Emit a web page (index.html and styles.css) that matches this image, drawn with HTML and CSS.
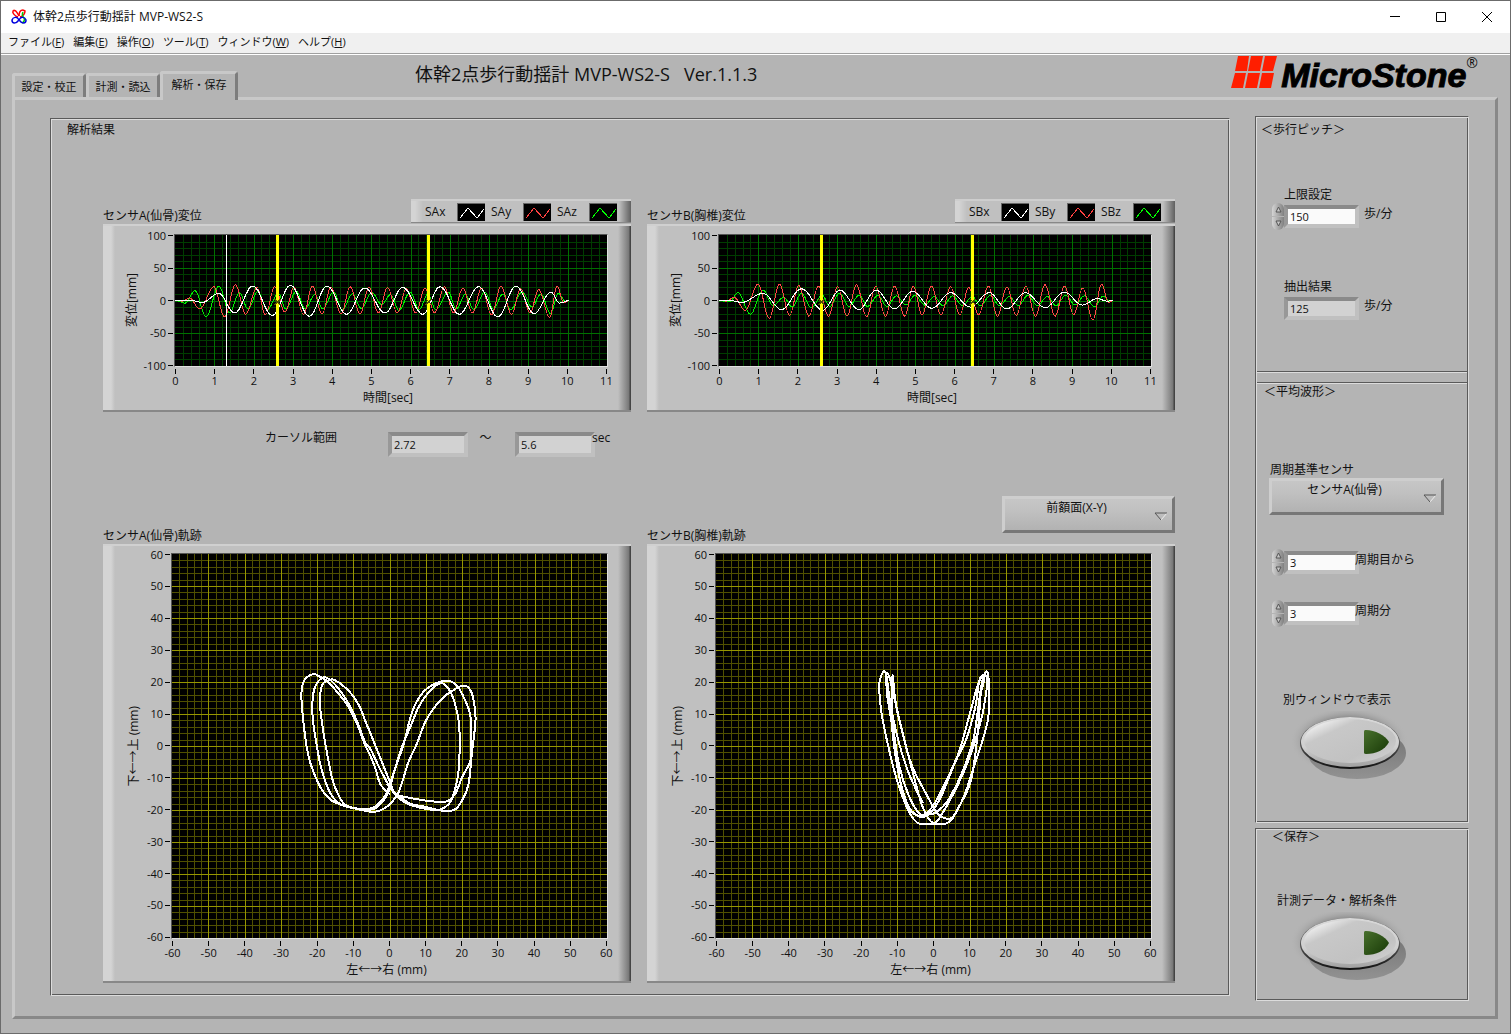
FILE: index.html
```html
<!DOCTYPE html>
<html lang="ja">
<head>
  <meta charset="utf-8">
  <title>体幹2点歩行動揺計 MVP-WS2-S</title>
  <link rel="stylesheet" href="styles.css">
</head>
<body>
  <div class="window">
    <header class="titlebar">
      <svg class="app-icon" width="16" height="16" viewBox="0 0 16 16" fill="none" stroke-width="1.5">
        <path stroke="#f00" d="M7 8C4 7 1 4 2 2C4 0 6 3 8 7"/>
        <path stroke="#f00" d="M8 7C8 3 10 1 12 1"/>
        <path stroke="#f00" d="M9 8C12 7 14 5 14 2L12 1"/>
        <path stroke="#0c0" d="M12 3C11 5 11 7 13 9C14 11 13 13 11 14"/>
        <path stroke="#00d" d="M8 11C6 7 2 8 1 11C1 15 5 15 8 11"/>
        <path stroke="#00d" d="M8 11C10 7 14 8 15 11C15 15 11 15 8 11"/>
      </svg>
      <span class="app-name">体幹2点歩行動揺計 MVP-WS2-S</span>
      <div class="window-buttons">
        <button type="button" aria-label="最小化"><svg width="12" height="12" viewBox="0 0 12 12"><path d="M1 5.500H11"/></svg></button>
        <button type="button" aria-label="最大化"><svg width="12" height="12" viewBox="0 0 12 12"><path d="M1.500 1.500H10.500V10.500H1.500Z"/></svg></button>
        <button type="button" aria-label="閉じる"><svg width="12" height="12" viewBox="0 0 12 12"><path d="M1 1L11 11M11 1L1 11"/></svg></button>
      </div>
    </header>
    <nav class="menubar">
      <button type="button">ファイル(<u>F</u>)</button>
      <button type="button">編集(<u>E</u>)</button>
      <button type="button">操作(<u>O</u>)</button>
      <button type="button">ツール(<u>T</u>)</button>
      <button type="button">ウィンドウ(<u>W</u>)</button>
      <button type="button">ヘルプ(<u>H</u>)</button>
    </nav>

    <main class="workspace">
      <div class="top">
        <div class="tabs">
          <button type="button" class="tab">設定・校正</button>
          <button type="button" class="tab">計測・読込</button>
          <button type="button" class="tab active">解析・保存</button>
        </div>
        <h1 class="heading"><span>体幹2点歩行動揺計 MVP-WS2-S</span><span>Ver.1.1.3</span></h1>
        <div class="logo">
          <svg width="46" height="32" viewBox="0 0 46 32" fill="#ff1e00">
            <path d="M7 0H18L16 15H4Z M20 0H32L29 15H17Z M34 0H46L42 15H31Z"/>
            <path d="M4 17H15L12 32H0Z M17 17H29L26 32H14Z M31 17H43L40 32H28Z"/>
          </svg>
          <span class="logo-name">MicroStone</span><span class="logo-mark">®</span>
        </div>
      </div>

      <div class="page">
        <section class="box results">
          <h2 class="caption">解析結果</h2>

          <div class="charts">
            <div>
              <div class="chart-head">
                <h3>センサA(仙骨)変位</h3>
                <div class="legend">
                  <span>SAx</span><svg class="x" width="28" height="18"><path d="M2 14L10 4L19 14L26 5"/></svg>
                  <span>SAy</span><svg class="y" width="28" height="18"><path d="M2 14L10 4L19 14L26 5"/></svg>
                  <span>SAz</span><svg class="z" width="28" height="18"><path d="M2 14L10 4L19 14L26 5"/></svg>
                </div>
              </div>
              <div class="chart wave" id="waveA"></div>
            </div>
            <div>
              <div class="chart-head">
                <h3>センサB(胸椎)変位</h3>
                <div class="legend">
                  <span>SBx</span><svg class="x" width="28" height="18"><path d="M2 14L10 4L19 14L26 5"/></svg>
                  <span>SBy</span><svg class="y" width="28" height="18"><path d="M2 14L10 4L19 14L26 5"/></svg>
                  <span>SBz</span><svg class="z" width="28" height="18"><path d="M2 14L10 4L19 14L26 5"/></svg>
                </div>
              </div>
              <div class="chart wave" id="waveB"></div>
            </div>
          </div>

          <div class="range">
            <label for="rangeFrom">カーソル範囲</label>
            <input id="rangeFrom" class="field readout" value="2.72" readonly>
            <span class="tilde">～</span>
            <input id="rangeTo" class="field readout" value="5.6" aria-label="カーソル範囲 終了" readonly>
            <span>sec</span>
          </div>

          <div class="charts">
            <div>
              <div class="chart-head tall">
                <h3>センサA(仙骨)軌跡</h3>
              </div>
              <div class="chart trace" id="traceA"></div>
            </div>
            <div>
              <div class="chart-head tall">
                <h3>センサB(胸椎)軌跡</h3>
                <div class="dropdown">
                  <select aria-label="表示面">
                    <option>前額面(X-Y)</option>
                    <option>矢状面(Z-Y)</option>
                    <option>水平面(X-Z)</option>
                  </select>
                  <svg width="14" height="9" viewBox="0 0 14 9"><path d="M13 1L7 8" stroke="#eee"/><path d="M7 8L1 1H13" stroke="#555"/></svg>
                </div>
              </div>
              <div class="chart trace" id="traceB"></div>
            </div>
          </div>
        </section>

        <aside class="side">
          <div class="box">
            <section class="pitch">
              <h2 class="caption">＜歩行ピッチ＞</h2>
              <div class="setting">
                <label for="limit">上限設定</label>
                <div class="row">
                  <div class="spin">
                    <button type="button" aria-label="増やす"><svg width="7" height="7"><path d="M1 6L3.500 1L6 6Z"/></svg></button>
                    <button type="button" aria-label="減らす"><svg width="7" height="7"><path d="M1 1H6L3.500 6Z"/></svg></button>
                  </div>
                  <input id="limit" class="field" type="number" value="150">
                  <span class="unit">歩/分</span>
                </div>
              </div>
              <div class="setting">
                <label for="detected">抽出結果</label>
                <div class="row">
                  <div class="spin-space"></div>
                  <input id="detected" class="field readout" value="125" readonly>
                  <span class="unit">歩/分</span>
                </div>
              </div>
            </section>
            <div class="divider"></div>
            <section class="average">
              <h2 class="caption">＜平均波形＞</h2>
              <label class="base-label" for="baseSensor">周期基準センサ</label>
              <div class="dropdown">
                <select id="baseSensor">
                  <option>センサA(仙骨)</option>
                  <option>センサB(胸椎)</option>
                </select>
                <svg width="14" height="9" viewBox="0 0 14 9"><path d="M13 1L7 8" stroke="#eee"/><path d="M7 8L1 1H13" stroke="#555"/></svg>
              </div>
              <div class="row cycles">
                <div class="spin">
                  <button type="button" aria-label="増やす"><svg width="7" height="7"><path d="M1 6L3.500 1L6 6Z"/></svg></button>
                  <button type="button" aria-label="減らす"><svg width="7" height="7"><path d="M1 1H6L3.500 6Z"/></svg></button>
                </div>
                <input id="cycleFrom" class="field" type="number" value="3">
                <label for="cycleFrom">周期目から</label>
              </div>
              <div class="row cycles">
                <div class="spin">
                  <button type="button" aria-label="増やす"><svg width="7" height="7"><path d="M1 6L3.500 1L6 6Z"/></svg></button>
                  <button type="button" aria-label="減らす"><svg width="7" height="7"><path d="M1 1H6L3.500 6Z"/></svg></button>
                </div>
                <input id="cycleCount" class="field" type="number" value="3">
                <label for="cycleCount">周期分</label>
              </div>
              <div class="action">
                <label for="showWindow">別ウィンドウで表示</label>
                <button type="button" id="showWindow" class="oval"><svg width="120" height="70" viewBox="0 0 120 70"><use href="#ovalButton"/></svg></button>
              </div>
            </section>
          </div>
          <section class="box save">
            <h2 class="caption">＜保存＞</h2>
            <div class="action">
              <label for="saveData">計測データ・解析条件</label>
              <button type="button" id="saveData" class="oval"><svg width="120" height="70" viewBox="0 0 120 70"><use href="#ovalButton"/></svg></button>
            </div>
          </section>
        </aside>
      </div>
    </main>
  </div>

  <!-- push button with an unlit lamp -->
  <svg class="defs" width="0" height="0">
    <defs>
      <linearGradient id="face" x1="0" y1="0" x2="1" y2="1">
        <stop offset="0.1" stop-color="#f4f4f4"/>
        <stop offset="0.3" stop-color="#c8c8c8"/>
        <stop offset="0.7" stop-color="#c2c2c2"/>
        <stop offset="1" stop-color="#d4d4d4"/>
      </linearGradient>
      <linearGradient id="edge" x1="0" y1="0" x2="0" y2="1">
        <stop offset="0" stop-color="#d8d8d8"/>
        <stop offset="0.6" stop-color="#d0d0d0"/>
        <stop offset="1" stop-color="#a0a0a0"/>
      </linearGradient>
      <linearGradient id="rim" x1="0" y1="0" x2="0" y2="1">
        <stop offset="0" stop-color="#555"/>
        <stop offset="0.5" stop-color="#555"/>
        <stop offset="1" stop-color="#111"/>
      </linearGradient>
      <linearGradient id="lamp" x1="0" y1="0" x2="1" y2="1">
        <stop offset="0" stop-color="#48702c"/>
        <stop offset="1" stop-color="#173806"/>
      </linearGradient>
      <linearGradient id="shade" x1="0" y1="0" x2="0" y2="1">
        <stop offset="0" stop-color="#707070"/>
        <stop offset="1" stop-color="#929292"/>
      </linearGradient>
      <radialGradient id="halo">
        <stop offset="0.7" stop-color="#909090"/>
        <stop offset="1" stop-color="#b4b4b4" stop-opacity="0"/>
      </radialGradient>
      <g id="ovalButton">
        <ellipse cx="59" cy="30" rx="59" ry="34" fill="url(#halo)"/>
        <ellipse cx="67" cy="42" rx="49" ry="26" fill="url(#shade)"/>
        <ellipse cx="60" cy="32" rx="50" ry="26" fill="url(#rim)"/>
        <ellipse cx="60" cy="31" rx="49" ry="25" fill="url(#edge)"/>
        <ellipse cx="60" cy="30" rx="46" ry="22" fill="url(#face)"/>
        <path d="M76 19C85 19 95 24 99 31C95 39 86 43 76 43C74 43 74 42 74 41V21C74 19 75 19 76 19Z" fill="url(#lamp)"/>
      </g>
    </defs>
  </svg>
  <script src="charts.js"></script>
</body>
</html>
```

FILE: styles.css
```css
* {
  box-sizing: border-box;
}

body {
  margin: 0;
  background-color: #b4b4b4;
  color: #111;
  font-family: 'Open Sans', 'Noto Sans CJK JP', sans-serif;
  font-size: 12px;
  line-height: 16px;
}

h1, h2, h3 {
  margin: 0;
  font-size: 12px;
  font-weight: normal;
}

button, input, select {
  font: inherit;
  color: inherit;
  border: none;
  background: none;
  padding: 0;
  margin: 0;
}

svg {
  display: block;
}

.defs {
  position: absolute;
}

.window {
  display: flex;
  flex-direction: column;
  min-height: 100vh;
  border: 1px solid #6b6b6b;
}

/* title bar and menu */

.titlebar {
  display: flex;
  align-items: center;
  height: 32px;
  padding-left: 10px;
  background-color: #fff;
}

.app-name {
  flex: 1;
  margin-left: 6px;
}

.window-buttons {
  display: flex;
}

.window-buttons button {
  display: flex;
  align-items: center;
  justify-content: center;
  width: 46px;
  height: 30px;
}

.window-buttons path {
  fill: none;
  stroke: #000;
}

.menubar {
  display: flex;
  gap: 9px;
  height: 22px;
  padding-left: 7px;
  background-color: #f0f0f0;
  border-bottom: 1px solid #fff;
  box-shadow: inset 0 -1px #a0a0a0;
}

.menubar button {
  height: 18px;
  font-size: 11px;
}

/* tabs and logo */

.workspace {
  display: flex;
  flex-direction: column;
  flex: 1;
  padding: 0 12px 14px 11px;
}

.top {
  display: flex;
  justify-content: space-between;
  height: 42px;
}

.tabs {
  display: flex;
  align-items: flex-end;
  width: 403px;
}

.tab {
  width: 74px;
  height: 24px;
  background-color: #b4b4b4;
  border: solid;
  border-width: 3px 3px 0;
  border-color: #c8c8c8 #7d7d7d #c8c8c8 #c8c8c8;
  border-radius: 3px 3px 0 0;
  font-size: 11px;
}

.tab.active {
  position: relative;
  width: 78px;
  height: 29px;
  margin-bottom: -3px;
  padding-bottom: 4px;
}

.heading {
  flex: 1;
  display: flex;
  gap: 14px;
  padding-top: 6px;
  font-size: 18px;
  line-height: 26px;
}

.logo {
  display: flex;
  padding-top: 1px;
  margin-right: 20px;
}

.logo-name {
  margin-left: 4px;
  font: italic bold 34px/38px 'Liberation Sans', sans-serif;
  color: #000;
  -webkit-text-stroke: 1px #000;
}

.logo-mark {
  font-size: 14px;
  line-height: 14px;
}

/* panels */

.page {
  display: grid;
  grid-template-columns: 1fr 214px;
  gap: 26px;
  flex: 1;
  padding: 16px 26px 15px 35px;
  border: 3px solid;
  border-color: #c8c8c8 #888 #888 #c8c8c8;
}

.box {
  border: 1px solid;
  border-color: #5a5a5a #dcdcdc #dcdcdc #5a5a5a;
  box-shadow: inset 1px 1px #dcdcdc, inset -1px -1px #5a5a5a;
}

.results {
  margin: 2px -1px 5px 0;
  padding: 3px 54px 0 52px;
}

.results > .caption {
  height: 77px;
  margin-left: -36px;
}

.charts {
  display: grid;
  grid-template-columns: 1fr 1fr;
  gap: 16px;
}

.chart-head {
  display: flex;
  justify-content: space-between;
  align-items: flex-end;
  height: 25px;
}

.chart-head.tall {
  height: 48px;
}

.chart-head.tall .dropdown {
  align-self: flex-start;
  width: 173px;
}

.legend {
  display: flex;
  align-items: center;
  height: 24px;
  margin-bottom: 1px;
  padding: 0 14px;
  background: linear-gradient(to right, #d4d4d4 4px, #c0c0c0 12px, #c0c0c0 calc(100% - 12px), #606060);
  border-top: 2px solid #cecece;
  border-bottom: 1px solid #888;
}

.legend span {
  width: 32px;
}

.legend svg {
  margin-right: 6px;
  background-color: #000;
  border-left: 1px solid #666;
  border-top: 1px solid #666;
}

.legend svg:last-child {
  margin-right: 0;
}

.legend path {
  fill: none;
  stroke: #fff;
  shape-rendering: crispEdges;
}

.legend .y path {
  stroke: #ff4040;
}

.legend .z path {
  stroke: #00ff00;
}

/* charts */

.chart {
  display: grid;
  grid-template-columns: 38px 33px 1fr;
  padding: 8px 23px 9px 0;
  background: linear-gradient(to right, #d4d4d4 8px, #c0c0c0 12px, #c0c0c0 calc(100% - 13px), #777 calc(100% - 2px), #444 calc(100% - 1px));
  border-top: 2px solid #d0d0d0;
  border-bottom: 2px solid #888;
}

.trace {
  grid-template-columns: 42px 26px 1fr;
  padding: 7px 23px 8px 0;
}

.y-name {
  display: flex;
  justify-content: center;
  align-items: center;
  padding-left: 20px;
}

.y-name span {
  writing-mode: vertical-rl;
  text-orientation: sideways;
  transform: rotate(180deg);
  white-space: nowrap;
}

.plot {
  width: 100%;
  height: 133px;
  background-color: #000;
  border: 1px solid;
  border-color: #555 #e0e0e0 #e0e0e0 #555;
}

.trace .plot {
  height: 386px;
}

.plot path {
  fill: none;
  vector-effect: non-scaling-stroke;
  shape-rendering: crispEdges;
}

.wave .minor {
  stroke: #003c00;
}

.wave .major {
  stroke: #007000;
}

.trace .minor {
  stroke: #505000;
}

.trace .major {
  stroke: #969600;
}

.plot .x {
  stroke: #fff;
}

.plot .y {
  stroke: #ff4646;
}

.plot .z {
  stroke: #00f000;
}

.plot .orbit {
  stroke: #fff;
  stroke-width: 2px;
}

.plot .cursor {
  stroke: #ffff00;
  stroke-width: 3px;
}

.plot .pointer {
  stroke: #fff;
}

.plot .mark {
  stroke: #505000;
}

.y-ticks,
.x-ticks {
  display: flex;
  justify-content: space-between;
  font-size: 11px;
  line-height: 14px;
}

.y-ticks {
  flex-direction: column;
  padding: 1px 0;
}

.y-ticks span {
  display: flex;
  justify-content: flex-end;
  align-items: center;
  height: 1px;
}

.y-ticks span::after {
  content: '';
  width: 5px;
  height: 1px;
  margin: 0 1px 0 2px;
  background-color: #000;
}

.x-ticks {
  grid-column: 3;
  height: 24px;
  padding: 2px 1px 0;
}

.x-ticks span {
  display: flex;
  flex-direction: column;
  align-items: center;
  width: 1px;
  white-space: nowrap;
}

.x-ticks span::before {
  content: '';
  flex: none;
  width: 1px;
  height: 5px;
  background-color: #000;
}

.x-name {
  grid-column: 3;
  padding-right: 6px;
  text-align: center;
  line-height: 14px;
  margin-bottom: -4px;
}

/* fields */

.field {
  width: 75px;
  height: 23px;
  padding-left: 2px;
  background-color: #fafafa;
  border: 4px solid;
  border-color: #8a8a8a #c0c0c0 #c0c0c0 #989898;
  font-size: 11px;
  appearance: textfield;
}

.field::-webkit-inner-spin-button {
  display: none;
}

.readout {
  background-color: #d2d2d2;
}

.range {
  display: flex;
  height: 84px;
  padding: 18px 0 0 162px;
}

.range label {
  width: 123px;
}

.range .field {
  width: 80px;
  height: 25px;
  margin-top: 2px;
}

.tilde {
  width: 47px;
  padding-right: 12px;
  text-align: center;
}

.range .tilde + .field {
  margin-right: -3px;
}

.dropdown {
  position: relative;
  height: 37px;
}

.dropdown select {
  width: 100%;
  height: 37px;
  padding: 0 24px 14px 0;
  appearance: none;
  background: linear-gradient(#c6c6c6, #c0c0c0 40%, #b2b2b2);
  border: 3px solid;
  border-color: #cecece #777 #777 #cecece;
  text-align: center;
  text-align-last: center;
}

.dropdown svg {
  position: absolute;
  right: 7px;
  bottom: 12px;
  fill: none;
  pointer-events: none;
}

/* right column */

.side {
  display: flex;
  flex-direction: column;
  gap: 5px;
}

.side .box {
  padding: 0 1px 1px;
}

.side .caption {
  padding-left: 4px;
}

.pitch {
  height: 254px;
  padding-top: 5px;
}

.setting {
  margin: 49px 0 0 15px;
}

.setting label {
  display: block;
  margin-left: 12px;
}

.row {
  display: flex;
  align-items: flex-start;
}

.spin {
  display: flex;
  flex-direction: column;
  gap: 1px;
  width: 12px;
}

.spin button {
  display: flex;
  justify-content: center;
  align-items: center;
  width: 12px;
  height: 13px;
  background: linear-gradient(to right, #d4d4d4, #808080);
  border-radius: 6px 6px 0 0;
}

.spin button + button {
  border-radius: 0 0 6px 6px;
}

.spin path {
  fill: #c8c8c8;
  stroke: #555;
}

.spin-space {
  width: 12px;
}

.row .field {
  margin-top: 2px;
}

.unit {
  margin: 3px 0 0 5px;
}

.divider {
  height: 12px;
  border: 1px solid #5a5a5a;
  border-width: 1px 0;
  box-shadow: inset 0 1px #dcdcdc, 0 1px #dcdcdc;
}

.average {
  height: 438px;
  padding-top: 1px;
}

.average .caption {
  padding-left: 7px;
  height: 78px;
}

.average .dropdown {
  width: 175px;
  margin: 0 0 34px 12px;
}

.base-label {
  display: block;
  margin-left: 13px;
}

.cycles {
  height: 51px;
  padding-left: 15px;
}

.cycles label {
  margin: 3px 0 0 -4px;
}

.action {
  display: flex;
  flex-direction: column;
  align-items: center;
  width: 160px;
}

.action label {
  white-space: nowrap;
}

.average .action {
  margin-top: 41px;
}

.oval {
  margin: 3px 0 0 25px;
}

.save {
  height: 173px;
}

.save .caption {
  height: 64px;
  padding-left: 15px;
}
```

FILE: charts.js
```js
var SVG = 'http://www.w3.org/2000/svg';

// turning points of each trace: [sec, mm]
var waves = {
  waveA: {
    x: [[0,0],[0.42,0],[0.7,-3],[1.11,11],[1.52,-19],[1.98,22],[2.48,-23],[2.94,23],[3.42,-24],[3.87,22],[4.37,-21],[4.83,19],[5.35,-19],[5.8,20],[6.31,-21],[6.75,21],[7.24,-21],[7.73,21],[8.22,-25],[8.68,22],[9.15,-20],[9.57,13],[9.79,-4],[10.04,0]],
    y: [[0,0],[0.2,-1],[0.37,4],[0.63,-13],[0.99,21],[1.26,-25],[1.54,24],[1.8,-21],[2.09,20],[2.3,-22],[2.54,21],[2.8,-18],[3.03,20],[3.27,-21],[3.5,22],[3.74,-21],[3.97,20],[4.23,-21],[4.46,21],[4.71,-21],[4.94,20],[5.18,-19],[5.41,20],[5.66,-19],[5.89,18],[6.13,-19],[6.37,19],[6.61,-19],[6.86,21],[7.09,-19],[7.33,19],[7.57,-19],[7.81,19],[8.06,-22],[8.3,22],[8.57,-21],[8.8,18],[9.04,-19],[9.26,17],[9.54,-26],[9.73,22],[9.9,-4],[10.04,0]],
    z: [[0,0],[0.26,-4],[0.51,15],[0.79,-25],[1.12,22],[1.39,-19],[1.64,12],[1.86,-13],[2.11,14],[2.35,-14],[2.63,11],[2.82,-13],[3.09,14],[3.31,-12],[3.57,9],[3.76,-13],[4.04,13],[4.26,-14],[4.52,10],[4.74,-12],[5.01,12],[5.26,-6],[5.49,9],[5.7,-15],[5.99,13],[6.22,-14],[6.44,10],[6.64,-14],[6.96,13],[7.16,-13],[7.39,9],[7.61,-14],[7.89,13],[8.11,-13],[8.35,10],[8.54,-14],[8.84,13],[9.09,-10],[9.32,10],[9.56,-20],[9.76,11],[9.94,-1],[10.04,0]]
  },
  waveB: {
    x: [[0,0],[0.3,0],[0.58,-3],[1.12,11],[1.59,-14],[2.1,18],[2.64,-15],[3.08,16],[3.56,-14],[4,16],[4.47,-13],[4.93,14],[5.42,-12],[5.9,12],[6.4,-10],[6.88,12],[7.33,-13],[7.8,12],[8.31,-11],[8.79,13],[9.25,-7],[9.63,3],[9.88,-1],[10.03,0]],
    y: [[0,0],[0.2,-1],[0.38,5],[0.67,-15],[0.99,25],[1.28,-27],[1.54,25],[1.8,-23],[2.03,23],[2.29,-24],[2.53,22],[2.79,-24],[3.02,21],[3.26,-24],[3.5,24],[3.76,-25],[3.99,22],[4.24,-24],[4.47,22],[4.73,-24],[4.95,22],[5.17,-22],[5.41,22],[5.65,-22],[5.9,21],[6.13,-22],[6.36,20],[6.61,-22],[6.86,22],[7.09,-24],[7.33,21],[7.57,-23],[7.81,22],[8.06,-24],[8.3,24],[8.56,-24],[8.8,22],[9.03,-22],[9.26,19],[9.52,-30],[9.74,25],[9.92,-3],[10.03,0]],
    z: [[0,0],[0.27,-2],[0.48,12],[0.8,-21],[1.12,16],[1.38,-8],[1.65,5],[1.86,-10],[2.1,11],[2.35,-11],[2.63,8],[2.82,-9],[3.07,11],[3.31,-9],[3.57,8],[3.78,-9],[4.05,8],[4.27,-9],[4.52,7],[4.76,-7],[4.99,8],[5.24,-7],[5.48,6],[5.7,-8],[5.95,7],[6.2,-8],[6.45,6],[6.66,-8],[6.91,8],[7.14,-8],[7.4,6],[7.62,-8],[7.87,8],[8.1,-8],[8.36,6],[8.58,-8],[8.83,8],[9.07,-7],[9.3,7],[9.57,-10],[9.78,7],[9.95,-1],[10.03,0]]
  }
};

// orbits in the frontal plane: x, y pairs in mm
var orbits = {
  traceA: [0.2,-15.2, -2.5,-12, -3.7,-7.7, -5.3,-3, -7,1, -9,7, -11.5,12.5, -14.5,17, -17.5,20.5, -19.5,21.8, -21,22.5, -23.5,20.5, -24.3,16.4, -23.8,8, -22.5,-2.4, -21,-8, -18.8,-13.4, -16,-17, -12.3,-18.7, -7.7,-20, -4.4,-20.6, -1.7,-19.7, 0.6,-17.6, 2.5,-14.5, 3.9,-9.8, 5.2,-5.1, 7.5,0.6, 9.8,7.4, 12.1,11.6, 14.4,14.7, 16.7,16.8, 20.4,18.9, 22.5,17.1, 23.5,12.1, 23.7,7.4, 22.7,-2.5, 21.8,-11.9, 20,-17.1, 17.8,-20, 14.4,-20.2, 9.8,-19, 5.7,-18, 2.5,-15.5, 0.2,-13, -2.6,-7.2, -5.3,-0.9, -6.8,1.3, -8.7,7, -11,12.7, -13.7,17.4, -16.5,20.8, -18.3,21.4, -20.2,19.3, -21.1,15.9, -21.2,9, -20,-0.3, -18.8,-7, -16.5,-14.4, -13.3,-18.4, -7.7,-19.7, -4.4,-19.2, -1.2,-15.6, 0.2,-11.4, 2,-5.6, 3.9,0.6, 6.2,10.5, 8.9,16.3, 12.1,19.2, 15.8,20.4, 18.6,18.9, 20.9,14.2, 22.3,9.5, 22.5,1.7, 22.3,-4.6, 20,-9.8, 18.1,-15, 15.4,-17.4, 10.3,-17.1, 4.8,-16, 1.6,-15, 0,-10.9, -5.3,4.1, -6.4,7, -8.2,12.2, -11,16.9, -15.1,20.6, -17,20.4, -18.6,19, -19.2,13.3, -18.3,4.9, -17.2,-2.4, -15.8,-10.2, -14.2,-15, -11.9,-18.6, -5.9,-19.9, -3,-18.7, -0.3,-14.5, 1.1,-8.8, 3.4,-0.4, 5.7,5.8, 8,12.1, 10.8,16.8, 14,19.6, 16.3,17.9, 18.1,13.1, 19.2,6.9, 19.3,-3.5, 18.8,-9.8, 17.7,-15, 16.3,-18.2, 13.1,-20, 6.6,-18.7, 2.9,-16.6, -0.7,-11.9],
  traceB: [-3,-17.8, -7,-8, -10,3, -12,14, -13,22, -13.7,23.3, -14.7,21, -15,18, -14.3,10, -12.5,0, -10,-11, -7.4,-19, -5.5,-22.8, -3.7,-24.4, 0,-24.4, 3,-24.4, 5,-23, 7.5,-18, 9,-14, 11,-7, 13.2,0.5, 15,8, 15.4,14, 14.9,23, 13.4,20, 12,9, 11,2, 8,-8, 4,-17, 1,-20.5, -1.5,-21.5, -4,-21, -7,-15, -9.5,-6, -11,5, -12,14, -13.2,22, -12.3,22, -11,16, -9,6, -6,-6, -2,-15, 1,-21, 3,-22.5, 5,-22.5, 7,-19, 10,-12, 11.5,-3, 12.5,8, 13,16, 14,21, 12.5,20, 10,10, 7,-2, 3,-12, 0,-18.5, -3,-21.8, -6,-20.5, -8.5,-14, -10.5,-3, -11.5,8, -11.3,22, -10.5,14, -8.5,4, -6,-7, -3,-19, 0,-24, 3,-20, 8,-9, 11,0, 13.5,10, 14.8,21, 12.8,21, 11.5,12, 9,2, 6,-5, 2,-16, -1,-21, -4,-22, -8,-17, -10,-5, -11.2,5, -12.8,16, -13,22]
};

function addPath(svg, name, d) {
  var path = document.createElementNS(SVG, 'path');
  path.setAttribute('class', name);
  path.setAttribute('d', d);
  svg.appendChild(path);
}

function ticks(name, from, to, step) {
  var html = '<div class="' + name + '">';
  for (var v = from; step > 0 ? v <= to : v >= to; v += step) {
    html += '<span>' + v + '</span>';
  }
  return html + '</div>';
}

// builds axes and grid, returns the svg and its scales
function makeChart(id, o) {
  var box = document.getElementById(id);
  box.innerHTML = '<div class="y-name"><span>' + o.yName + '</span></div>' +
    ticks('y-ticks', o.yMax, -o.yMax, -o.yStep) +
    '<svg class="plot" preserveAspectRatio="none" viewBox="0 0 ' + o.w + ' ' + o.h + '"></svg>' +
    ticks('x-ticks', o.xMin, o.xMax, o.xStep) +
    '<div class="x-name">' + o.xName + '</div>';

  var svg = box.querySelector('.plot');
  var cols = (o.xMax - o.xMin) / o.xStep * 5;
  var rows = o.yMax * 2 / o.yStep * 5;
  var minor = '', major = '', i, line;
  for (i = 1; i < cols; i++) {
    line = 'M' + (Math.round(i * o.w / cols) + 0.5) + ' 0V' + o.h;
    if (i % 5) { minor += line; } else { major += line; }
  }
  for (i = 1; i < rows; i++) {
    line = 'M0 ' + (Math.round(i * o.h / rows) + 0.5) + 'H' + o.w;
    if (i % 5) { minor += line; } else { major += line; }
  }
  addPath(svg, 'minor', minor);
  addPath(svg, 'major', major);
  return {
    svg: svg,
    x: v => (v - o.xMin) / (o.xMax - o.xMin) * o.w,
    y: v => (o.yMax - v) / (o.yMax * 2) * o.h
  };
}

Object.keys(waves).forEach(id => {
  var c = makeChart(id, { w: 432, h: 131, xMin: 0, xMax: 11, xStep: 1, yMax: 100, yStep: 50, xName: '時間[sec]', yName: '変位[mm]' });
  ['z', 'y', 'x'].forEach(axis => {
    var pts = waves[id][axis];
    var d = 'M' + c.x(pts[0][0]) + ' ' + c.y(pts[0][1]);
    for (var i = 1; i < pts.length; i++) {
      var x0 = c.x(pts[i - 1][0]), x1 = c.x(pts[i][0]), mid = (x1 - x0) * 0.4;
      var y0 = c.y(pts[i - 1][1]), y1 = c.y(pts[i][1]);
      d += 'C' + [x0 + mid, y0, x1 - mid, y1, x1, y1].join(' ');
    }
    addPath(c.svg, axis, d);
  });
  if (id === 'waveA') {
    addPath(c.svg, 'pointer', 'M' + c.x(1.31) + ' 0V131');
  }
  [2.61, 6.46].forEach(sec => {
    var x = c.x(sec), y = c.y(-2);
    addPath(c.svg, 'cursor', 'M' + x + ' 0V131');
    addPath(c.svg, 'mark', 'M' + (x - 3) + ' ' + (y - 3) + 'l6 6m0 -6l-6 6');
  });
});

Object.keys(orbits).forEach(id => {
  var c = makeChart(id, { w: 435, h: 384, xMin: -60, xMax: 60, xStep: 10, yMax: 60, yStep: 10, xName: '左←→右 (mm)', yName: '下←→上 (mm)' });
  var v = orbits[id], pts = [];
  for (var i = 0; i < v.length; i += 2) {
    pts.push([c.x(v[i]), c.y(v[i + 1])]);
  }
  var d = 'M' + pts[0].join(' ');
  for (i = 0; i < pts.length - 1; i++) {
    var a = pts[i - 1] || pts[i], b = pts[i], e = pts[i + 1], f = pts[i + 2] || e;
    d += 'C' + [b[0] + (e[0] - a[0]) / 6, b[1] + (e[1] - a[1]) / 6, e[0] - (f[0] - b[0]) / 6, e[1] - (f[1] - b[1]) / 6, e[0], e[1]].join(' ');
  }
  addPath(c.svg, 'orbit', d);
});
```
